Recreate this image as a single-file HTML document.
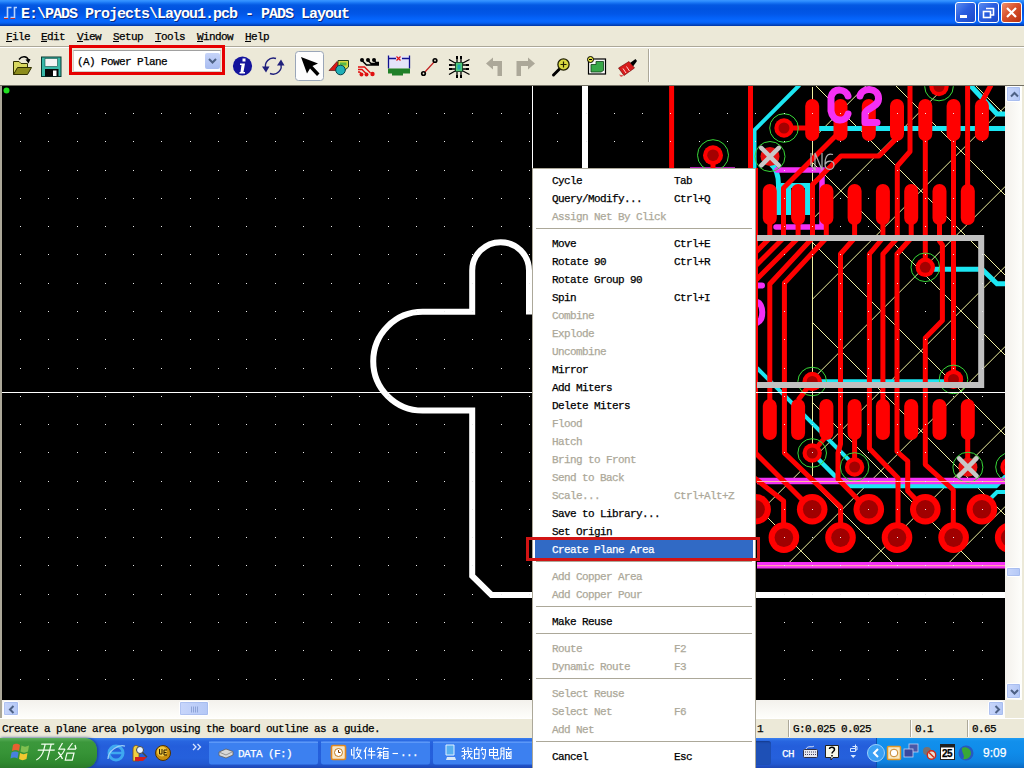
<!DOCTYPE html><html><head><meta charset="utf-8"><title>PADS Layout</title><style>
*{box-sizing:border-box}
html,body{margin:0;padding:0}
body{width:1024px;height:768px;position:relative;overflow:hidden;background:#ece9d8;font-family:"Liberation Mono",monospace;font-size:11px;letter-spacing:-0.6px;color:#000;-webkit-text-stroke:0.25px}
.abs{position:absolute}
#title{left:0;top:0;width:1024px;height:26px;background:linear-gradient(#3a95ff 0,#3090ff 1px,#1672f2 3px,#0459e2 5px,#0053e0 9px,#0257e8 14px,#0462f8 18px,#0868ff 21px,#0560f2 23px,#0244bc 25px,#0034a4 26px)}
#title .t{left:21px;top:6px;font-family:"Liberation Mono",monospace;font-weight:bold;font-size:15px;letter-spacing:-1px;color:#fff;white-space:pre;text-shadow:1px 1px 0 #0a2a80;-webkit-text-stroke:0}
.tb{position:absolute;top:2px;width:21px;height:21px;border:1px solid #fff;border-radius:3px;background:linear-gradient(135deg,#5a8cf0 0,#2a5ee0 45%,#1c48c8 100%)}
#menubar{left:0;top:26px;width:1024px;height:20px;background:#ece9d8}
#menubar span{position:absolute;top:5px;white-space:pre}
#menubar u{text-decoration:underline}
#toolbar{left:0;top:46px;width:1024px;height:40px;background:#ece9d8;border-top:1px solid #aca899}
#toolbar:before{content:"";position:absolute;left:0;top:0;width:100%;height:1px;background:#fff}
.m{position:absolute;left:552px;white-space:pre;height:14px;line-height:14px}
.m.d{color:#aca899}
.k{position:absolute;left:674px;white-space:pre;height:14px;line-height:14px}
.k.d{color:#aca899}
.sep{position:absolute;left:536px;width:216px;height:1px;background:#aca899}
.sbb{width:15px;height:16px;border:1px solid #fff;border-radius:2px;background:linear-gradient(90deg,#c8d6fb,#b4c8f6);box-shadow:0 0 0 0.5px #98b0e8 inset}
.vs{top:720px;width:2px;height:17px;border-left:1px solid #aca899;border-right:1px solid #fff}
</style></head><body>
<div id="title" class="abs">
<svg class="abs" style="left:2px;top:3px" width="18" height="18" viewBox="0 0 18 18"><path d="M2 14.5H5.5V4.5H9.5M8.5 14.5H12.5V4.5H15" stroke="#b8d4ff" stroke-width="1.6" fill="none"/><path d="M2 15.5H6M8.5 15.5H13" stroke="#c03030" stroke-width="1"/></svg>
<div class="abs t">E:\PADS Projects\Layou1.pcb - PADS Layout</div>
<div class="tb" style="left:955px"><svg width="19" height="19"><rect x="4" y="12" width="7" height="3" fill="#fff"/></svg></div>
<div class="tb" style="left:978px"><svg width="19" height="19"><path d="M7 5.5H14.5V12H12" stroke="#fff" stroke-width="1.6" fill="none"/><rect x="4.5" y="8.5" width="7" height="6" stroke="#fff" stroke-width="1.6" fill="none"/></svg></div>
<div class="tb" style="left:1001px;background:linear-gradient(135deg,#f0906c 0,#d8512c 45%,#b83010 100%)"><svg width="19" height="19"><path d="M5 5L14 14M14 5L5 14" stroke="#fff" stroke-width="2.2"/></svg></div>
</div>
<div id="menubar" class="abs">
<span style="left:6px"><u>F</u>ile</span><span style="left:41px"><u>E</u>dit</span><span style="left:77px"><u>V</u>iew</span><span style="left:113px"><u>S</u>etup</span><span style="left:155px"><u>T</u>ools</span><span style="left:197px"><u>W</u>indow</span><span style="left:245px"><u>H</u>elp</span>
</div>
<div id="toolbar" class="abs"></div>
<div class="abs" style="left:69px;top:45px;width:156px;height:30px;border:3px solid #e60000"></div>
<div class="abs" style="left:73px;top:50px;width:148px;height:22px;background:#fff;border:1px solid #d4d0c8;border-top-color:#a0a0a0"></div>
<div class="abs" style="left:77px;top:56px;white-space:pre">(A) Power Plane</div>
<div class="abs" style="left:205px;top:53px;width:15px;height:16px;background:linear-gradient(#c6d4f8,#a8bcf0);border-radius:2px"><svg width="15" height="16"><path d="M4 6L7.5 9.5L11 6" stroke="#4d6185" stroke-width="2" fill="none"/></svg></div>
<svg class="abs" style="left:0;top:46px" width="1024" height="40" viewBox="0 46 1024 40">
<path d="M13.5 74.5V61.5H19L21 63.5H27.5V67" fill="#d8d860" stroke="#303000" stroke-width="1"/>
<path d="M13.5 74.5L17.5 67.5H31.5L27.5 74.5Z" fill="#8c8c1c" stroke="#303000" stroke-width="1"/>
<path d="M19 59.5C22 55.5 27 56 28.5 60" fill="none" stroke="#000" stroke-width="1.4"/>
<path d="M25.5 59.5L30.5 59L28.5 63.5Z" fill="#000"/>
<rect x="41.5" y="57" width="19.5" height="19.5" fill="#38b8a8" stroke="#083830" stroke-width="1"/>
<rect x="45" y="58.5" width="12.5" height="8" fill="#f4f4f4" stroke="#105048" stroke-width="0.6"/>
<rect x="45" y="69" width="13.5" height="7.5" fill="#080808"/>
<rect x="53" y="70.5" width="3.5" height="5.5" fill="#fff"/>
<circle cx="242.5" cy="66" r="9.6" fill="#14149c"/>
<path d="M242.5 58.5h3v3h-3zM240 63.5h5l-1.5 8.5h1.5v1.5h-5.5v-1.5h1l1-7h-1.5z" fill="#fff"/>
<path d="M266 69A8 8 0 0 1 276 58.5" fill="none" stroke="#20207c" stroke-width="1.4"/>
<path d="M280.5 63A8 8 0 0 1 270 73.5" fill="none" stroke="#20207c" stroke-width="1.4"/>
<path d="M262 66.5L269.5 66.5L266 72.5Z" fill="#20207c"/>
<path d="M277 65.5L284.5 65.5L281 59.5Z" fill="#20207c"/>
<rect x="295.5" y="51.5" width="28" height="29" rx="3" fill="#fdfdfd" stroke="#9aa6b8" stroke-width="1"/>
<path d="M301 57L318 63.5L312.5 66L319.5 73.5L317 76L310 68.5L307 73.5Z" fill="#000"/>
<path d="M329 70.5L337 61.5L345 70.5Z" fill="#d81818" stroke="#400" stroke-width="0.6"/>
<path d="M338 60.5H348.5V67L345 70H338Z" fill="#d8d840" stroke="#204020" stroke-width="1"/>
<rect x="340" y="62.5" width="6.5" height="3" fill="#58b848"/>
<circle cx="340.5" cy="70" r="4.8" fill="#20b0b8" stroke="#084048" stroke-width="1"/>
<path d="M362 60.5L366.5 65H379M368 60.5L371 63.5H379M374 60.5L376 62.5H379" fill="none" stroke="#000" stroke-width="1.5"/>
<circle cx="362" cy="60" r="2" fill="#000"/><circle cx="368" cy="60" r="2" fill="#000"/><circle cx="374" cy="60" r="2" fill="#000"/>
<path d="M358 67H364.5L370.5 73M358 69.5H362L366 73.5M358 72H359.5L361.5 74" fill="none" stroke="#e01010" stroke-width="1.4"/>
<circle cx="361.5" cy="74.5" r="2" fill="#e01010"/><circle cx="366.5" cy="74.5" r="2" fill="#e01010"/><circle cx="372.5" cy="74" r="2.2" fill="#e01010"/>
<rect x="389" y="56" width="20" height="12.5" fill="#e4e4f8"/>
<path d="M388.5 55.5V68.5M409.5 55.5V68.5M389 58.5H396M402 58.5H409" stroke="#101090" stroke-width="1.3" fill="none"/>
<path d="M396.5 56.5L400.5 60.5M400.5 56.5L396.5 60.5" stroke="#e01010" stroke-width="1.2"/>
<path d="M388 68.5H410V73.5H403V75.5H392V73.5H388Z" fill="#208028"/>
<path d="M424 73L435 61" stroke="#c02020" stroke-width="1.2"/>
<circle cx="423.5" cy="73.5" r="2.6" fill="#000"/><circle cx="435" cy="60.5" r="2.6" fill="#000"/>
<circle cx="423.5" cy="73.5" r="0.9" fill="#ece9d8"/><circle cx="435" cy="60.5" r="0.9" fill="#ece9d8"/>
<path d="M449 59.5L456 63.5M449 74.5L456 70.5M469.5 59.5L462 63.5M469.5 74.5L462 70.5M450 65H456M450 69H456M462 65H468.5M462 69H468.5M457 57V62M461 57V62M457 72V77.5M461 72V77.5" stroke="#000" stroke-width="1.3" fill="none"/>
<path d="M449 65H452M449 69H452M466 65H469M466 69H469M457 56V59M461 56V59M457 75V78M461 75V78" stroke="#000" stroke-width="2"/>
<rect x="455.5" y="62.5" width="7" height="9" fill="#50c878" stroke="#083018" stroke-width="0.8"/>
<rect x="457.5" y="64.5" width="3" height="5" fill="#20a8b0"/>
<path d="M486 63.5L493 57.5V61H502V76H497.5V66H493V69.5Z" fill="#aca899"/>
<path d="M535 63.5L528 57.5V61H516.5V76H521V66H528V69.5Z" fill="#aca899"/>
<path d="M553.5 75L560 68.5" stroke="#000" stroke-width="3" stroke-linecap="round"/>
<circle cx="563.5" cy="64.5" r="5.6" fill="#d8d840" stroke="#202000" stroke-width="1.3"/>
<path d="M560.5 64.5H566.5M563.5 61.5V67.5" stroke="#202000" stroke-width="1.2"/>
<rect x="588.5" y="59" width="17" height="15" fill="#f8f8f8" stroke="#000" stroke-width="1.2"/>
<path d="M591 64.5H596V61.5H603.5V70.5L601 72H591Z" fill="#38a848" stroke="#104018" stroke-width="0.8"/>
<circle cx="590.5" cy="59.5" r="3" fill="#e0e040" stroke="#000" stroke-width="1"/>
<path d="M589 59.5H592" stroke="#000" stroke-width="1"/>
<path d="M630 63L635.5 59L637 61L633 66.5Z" fill="#000"/>
<path d="M618.5 68L629 61.5L634.5 68L624 75.5Z" fill="#d81c1c" stroke="#600" stroke-width="0.6"/>
<path d="M623 68.5L626 73M626.5 66.5L629.5 71" stroke="#ffd0d0" stroke-width="1"/>
<path d="M619 74.5L624 75.5L621 77Z" fill="#e05050"/>
<rect x="648" y="49" width="1" height="33" fill="#aca899"/><rect x="649" y="49" width="1" height="33" fill="#fff"/>
</svg>
<svg class="abs" style="left:0;top:0" width="1024" height="768" viewBox="0 0 1024 768"><defs><clipPath id="cv"><rect x="2" y="86" width="1003" height="614"/></clipPath><clipPath id="hc"><path d="M812 86H1005V562H757V470H812Z"/></clipPath></defs><rect x="0" y="85" width="1024" height="1" fill="#716f64"/><rect x="0" y="86" width="2" height="632" fill="#aca899"/><g clip-path="url(#cv)"><rect x="2" y="86" width="1003" height="614" fill="#000"/><g clip-path="url(#hc)"><path d="M545.7 86L-68.3 700M625.7 86L11.7 700M705.7 86L91.7 700M785.7 86L171.7 700M865.7 86L251.7 700M945.7 86L331.7 700M1025.7 86L411.7 700M1105.7 86L491.7 700M1185.7 86L571.7 700M1265.7 86L651.7 700M1345.7 86L731.7 700M1425.7 86L811.7 700M1505.7 86L891.7 700M1585.7 86L971.7 700M176 86L790 700M256 86L870 700M336 86L950 700M416 86L1030 700M496 86L1110 700M576 86L1190 700M656 86L1270 700M736 86L1350 700M816 86L1430 700M896 86L1510 700M976 86L1590 700M1056 86L1670 700M1136 86L1750 700M1216 86L1830 700" stroke="#f0f0a0" stroke-width="1" fill="none"/><path d="M812.5 87V476" stroke="#f0f0a0" stroke-width="1"/></g><g fill="none" stroke="#1ce6f2"><path d="M819 128.4H1005" stroke-width="5"/><path d="M799.5 85L754.5 130V168" stroke-width="4"/><path d="M970 85L997 114H1006" stroke-width="5"/><path d="M771 164C776 168 778.5 174 778.5 185V215" stroke-width="5"/><path d="M783.5 215V185.5H807.5V215" stroke-width="5"/><path d="M788.5 188V215" stroke-width="5"/><path d="M934 269.3H982L997 283.7H1006" stroke-width="5"/><path d="M820 381H954" stroke-width="3.5"/><path d="M757 368L851 462" stroke-width="4"/><path d="M812.2 453L840 481L846 486H996L1006 476" stroke-width="4.5"/><path d="M1006 492H997L986 503" stroke-width="4"/></g><g fill="none" stroke="#f430f4" stroke-linecap="round"><path d="M777 170H822V227H776" stroke-width="5.5"/><path d="M757 285.5H762M757 302C764 304 764 320 757 323" stroke-width="6"/></g><path d="M690 168.5H735" stroke="#b020b0" stroke-width="3"/><path d="M757 481H1005M757 565.2H1005" stroke="#f430f4" stroke-width="6.5" fill="none"/><g fill="none" stroke="#ff0000" stroke-width="5" stroke-linejoin="round"><path d="M671.6 86V168"/><path d="M750.5 86V168"/><path d="M713 155V170"/><path d="M755.5 168V453L805 502.5L812.2 509.3"/><path d="M750 474.5L783.6 501V537"/><path d="M784 128H812"/><path d="M840.5 131L783.5 188V238L755 266.5"/><path d="M897 138L879 156H841L812.5 184.5V238L769.8 284V400"/><path d="M910 86V151.5L897.3 166V238L882.9 254V400"/><path d="M925.3 140V267"/><path d="M953.5 140V379"/><path d="M967.6 86V186"/><path d="M981.8 102L991 85"/><path d="M769.8 224V238L755 253"/><path d="M798.1 224V238L755 281"/><path d="M826.3 224V238L784.4 283V453L840.6 507V537"/><path d="M854.6 224V238L840.5 254V444L838 453V479L858 499.5L868.8 509.3"/><path d="M882.9 224V238L869.4 254V448.6L898 478V537"/><path d="M911.2 224V238L897 254V451.5L907.7 461V491L925.3 509.3"/><path d="M939.5 224V241L942.4 245V320.5L925.3 338V464.6L953.3 490V537"/><path d="M812.2 381.5L798.1 400"/><path d="M812.2 453L826.3 436"/><path d="M854.6 438V467"/><path d="M967.7 438V467"/></g><rect x="805.2" y="99" width="14" height="42" rx="7" fill="#ff0000"/><rect x="833.5" y="99" width="14" height="42" rx="7" fill="#ff0000"/><rect x="861.8" y="99" width="14" height="42" rx="7" fill="#ff0000"/><rect x="890" y="99" width="14" height="42" rx="7" fill="#ff0000"/><rect x="918.3" y="99" width="14" height="42" rx="7" fill="#ff0000"/><rect x="946.6" y="99" width="14" height="42" rx="7" fill="#ff0000"/><rect x="974.9" y="99" width="14" height="42" rx="7" fill="#ff0000"/><rect x="762.8" y="184" width="14" height="41" rx="7" fill="#ff0000"/><rect x="791.1" y="184" width="14" height="41" rx="7" fill="#ff0000"/><rect x="819.4" y="184" width="14" height="41" rx="7" fill="#ff0000"/><rect x="847.6" y="184" width="14" height="41" rx="7" fill="#ff0000"/><rect x="875.9" y="184" width="14" height="41" rx="7" fill="#ff0000"/><rect x="904.2" y="184" width="14" height="41" rx="7" fill="#ff0000"/><rect x="932.5" y="184" width="14" height="41" rx="7" fill="#ff0000"/><rect x="960.8" y="184" width="14" height="41" rx="7" fill="#ff0000"/><rect x="762.8" y="399" width="14" height="41" rx="7" fill="#ff0000"/><rect x="791.1" y="399" width="14" height="41" rx="7" fill="#ff0000"/><rect x="819.4" y="399" width="14" height="41" rx="7" fill="#ff0000"/><rect x="847.6" y="399" width="14" height="41" rx="7" fill="#ff0000"/><rect x="875.9" y="399" width="14" height="41" rx="7" fill="#ff0000"/><rect x="904.2" y="399" width="14" height="41" rx="7" fill="#ff0000"/><rect x="932.5" y="399" width="14" height="41" rx="7" fill="#ff0000"/><rect x="960.8" y="399" width="14" height="41" rx="7" fill="#ff0000"/><circle cx="784" cy="128" r="9.7" fill="#ff0000"/><circle cx="784" cy="128" r="5.5" fill="#a40000"/><circle cx="784" cy="128" r="14.3" fill="none" stroke="#38d838" stroke-width="1"/><circle cx="713" cy="155.2" r="10" fill="#ff0000"/><circle cx="713" cy="155.2" r="5.8" fill="#a40000"/><circle cx="713" cy="155.2" r="15.5" fill="none" stroke="#38d838" stroke-width="1"/><circle cx="939" cy="86.5" r="9.7" fill="#ff0000"/><circle cx="939" cy="86.5" r="5.5" fill="#a40000"/><circle cx="939" cy="86.5" r="14.3" fill="none" stroke="#38d838" stroke-width="1"/><circle cx="925.3" cy="267.3" r="9.7" fill="#ff0000"/><circle cx="925.3" cy="267.3" r="5.5" fill="#a40000"/><circle cx="925.3" cy="267.3" r="14.3" fill="none" stroke="#38d838" stroke-width="1"/><circle cx="812.2" cy="381.5" r="9.7" fill="#ff0000"/><circle cx="812.2" cy="381.5" r="5.5" fill="#a40000"/><circle cx="812.2" cy="381.5" r="14.3" fill="none" stroke="#38d838" stroke-width="1"/><circle cx="953.5" cy="379.4" r="9.7" fill="#ff0000"/><circle cx="953.5" cy="379.4" r="5.5" fill="#a40000"/><circle cx="953.5" cy="379.4" r="14.3" fill="none" stroke="#38d838" stroke-width="1"/><circle cx="812.2" cy="453" r="9.7" fill="#ff0000"/><circle cx="812.2" cy="453" r="5.5" fill="#a40000"/><circle cx="812.2" cy="453" r="14.3" fill="none" stroke="#38d838" stroke-width="1"/><circle cx="854.6" cy="467" r="9.7" fill="#ff0000"/><circle cx="854.6" cy="467" r="5.5" fill="#a40000"/><circle cx="854.6" cy="467" r="14.3" fill="none" stroke="#38d838" stroke-width="1"/><circle cx="1010" cy="467" r="9.7" fill="#ff0000"/><circle cx="1010" cy="467" r="5.5" fill="#a40000"/><circle cx="1010" cy="467" r="14.3" fill="none" stroke="#38d838" stroke-width="1"/><circle cx="770" cy="156.5" r="9.5" fill="#e81010"/><circle cx="770" cy="156.5" r="15" fill="none" stroke="#38d838" stroke-width="1"/><path d="M761.2 147.8l17.5 17.5M778.8 147.8l-17.5 17.5" stroke="#c8c8c8" stroke-width="4.5" stroke-linecap="round"/><circle cx="967.9" cy="467.2" r="9.5" fill="#e81010"/><circle cx="967.9" cy="467.2" r="15" fill="none" stroke="#38d838" stroke-width="1"/><path d="M959.1 458.4l17.5 17.5M976.6 458.4l-17.5 17.5" stroke="#c8c8c8" stroke-width="4.5" stroke-linecap="round"/><circle cx="755.6" cy="509.3" r="15.3" fill="#ff0000"/><circle cx="755.6" cy="509.3" r="9.3" fill="#a00000"/><circle cx="812.2" cy="509.3" r="15.3" fill="#ff0000"/><circle cx="812.2" cy="509.3" r="9.3" fill="#a00000"/><circle cx="868.8" cy="509.3" r="15.3" fill="#ff0000"/><circle cx="868.8" cy="509.3" r="9.3" fill="#a00000"/><circle cx="925.3" cy="509.3" r="15.3" fill="#ff0000"/><circle cx="925.3" cy="509.3" r="9.3" fill="#a00000"/><circle cx="981.9" cy="509.3" r="15.3" fill="#ff0000"/><circle cx="981.9" cy="509.3" r="9.3" fill="#a00000"/><circle cx="783.9" cy="537.6" r="15.3" fill="#ff0000"/><circle cx="783.9" cy="537.6" r="9.3" fill="#a00000"/><circle cx="840.5" cy="537.6" r="15.3" fill="#ff0000"/><circle cx="840.5" cy="537.6" r="9.3" fill="#a00000"/><circle cx="897" cy="537.6" r="15.3" fill="#ff0000"/><circle cx="897" cy="537.6" r="9.3" fill="#a00000"/><circle cx="953.6" cy="537.6" r="15.3" fill="#ff0000"/><circle cx="953.6" cy="537.6" r="9.3" fill="#a00000"/><circle cx="1010.2" cy="537.6" r="15.3" fill="#ff0000"/><circle cx="1010.2" cy="537.6" r="9.3" fill="#a00000"/><g fill="none" stroke="#f430f4" stroke-width="7" stroke-linecap="round" stroke-linejoin="round"><path d="M848 96C846 89 834 87 831 97V111C833 123 846 122 848 114"/><path d="M860 96C862 87 879 87 878.5 99C878 108 865 108 865 114V122.5H877"/></g><path d="M757 481.5H1005M757 565.7H1005" stroke="#ffb8a0" stroke-width="1"/><path d="M811 153V165.5L815 170V153L822 170V153M833 154.5C826 152 825 160 825 164C825 171 834 171 834 165C834 160 827 160 825.5 164" fill="none" stroke="#b0b0b0" stroke-width="1.2"/><path d="M757 238H981.2V385H757" fill="none" stroke="#c0c0c0" stroke-width="6"/><path d="M585 86V168" stroke="#fff" stroke-width="6" fill="none"/><path d="M529 314.5V270.5A28.4 28.4 0 0 0 472.2 270.5V311.8H422.6A49.4 49.4 0 0 0 422.6 410.6H472.2V576L491.5 595H1005" stroke="#fff" stroke-width="6" fill="none"/><path d="M2 392.5H1005M532.5 86V168" stroke="#fff" stroke-width="1"/><circle cx="6.5" cy="90.5" r="3" fill="#20e020"/><path d="M20 113h1v1h-1zM20 141h1v1h-1zM20 170h1v1h-1zM20 198h1v1h-1zM20 226h1v1h-1zM20 254h1v1h-1zM20 283h1v1h-1zM20 311h1v1h-1zM20 339h1v1h-1zM20 368h1v1h-1zM20 396h1v1h-1zM20 424h1v1h-1zM20 452h1v1h-1zM20 481h1v1h-1zM20 509h1v1h-1zM20 537h1v1h-1zM20 565h1v1h-1zM20 594h1v1h-1zM20 622h1v1h-1zM20 650h1v1h-1zM20 679h1v1h-1zM48 113h1v1h-1zM48 141h1v1h-1zM48 170h1v1h-1zM48 198h1v1h-1zM48 226h1v1h-1zM48 254h1v1h-1zM48 283h1v1h-1zM48 311h1v1h-1zM48 339h1v1h-1zM48 368h1v1h-1zM48 396h1v1h-1zM48 424h1v1h-1zM48 452h1v1h-1zM48 481h1v1h-1zM48 509h1v1h-1zM48 537h1v1h-1zM48 565h1v1h-1zM48 594h1v1h-1zM48 622h1v1h-1zM48 650h1v1h-1zM48 679h1v1h-1zM77 113h1v1h-1zM77 141h1v1h-1zM77 170h1v1h-1zM77 198h1v1h-1zM77 226h1v1h-1zM77 254h1v1h-1zM77 283h1v1h-1zM77 311h1v1h-1zM77 339h1v1h-1zM77 368h1v1h-1zM77 396h1v1h-1zM77 424h1v1h-1zM77 452h1v1h-1zM77 481h1v1h-1zM77 509h1v1h-1zM77 537h1v1h-1zM77 565h1v1h-1zM77 594h1v1h-1zM77 622h1v1h-1zM77 650h1v1h-1zM77 679h1v1h-1zM105 113h1v1h-1zM105 141h1v1h-1zM105 170h1v1h-1zM105 198h1v1h-1zM105 226h1v1h-1zM105 254h1v1h-1zM105 283h1v1h-1zM105 311h1v1h-1zM105 339h1v1h-1zM105 368h1v1h-1zM105 396h1v1h-1zM105 424h1v1h-1zM105 452h1v1h-1zM105 481h1v1h-1zM105 509h1v1h-1zM105 537h1v1h-1zM105 565h1v1h-1zM105 594h1v1h-1zM105 622h1v1h-1zM105 650h1v1h-1zM105 679h1v1h-1zM133 113h1v1h-1zM133 141h1v1h-1zM133 170h1v1h-1zM133 198h1v1h-1zM133 226h1v1h-1zM133 254h1v1h-1zM133 283h1v1h-1zM133 311h1v1h-1zM133 339h1v1h-1zM133 368h1v1h-1zM133 396h1v1h-1zM133 424h1v1h-1zM133 452h1v1h-1zM133 481h1v1h-1zM133 509h1v1h-1zM133 537h1v1h-1zM133 565h1v1h-1zM133 594h1v1h-1zM133 622h1v1h-1zM133 650h1v1h-1zM133 679h1v1h-1zM161 113h1v1h-1zM161 141h1v1h-1zM161 170h1v1h-1zM161 198h1v1h-1zM161 226h1v1h-1zM161 254h1v1h-1zM161 283h1v1h-1zM161 311h1v1h-1zM161 339h1v1h-1zM161 368h1v1h-1zM161 396h1v1h-1zM161 424h1v1h-1zM161 452h1v1h-1zM161 481h1v1h-1zM161 509h1v1h-1zM161 537h1v1h-1zM161 565h1v1h-1zM161 594h1v1h-1zM161 622h1v1h-1zM161 650h1v1h-1zM161 679h1v1h-1zM190 113h1v1h-1zM190 141h1v1h-1zM190 170h1v1h-1zM190 198h1v1h-1zM190 226h1v1h-1zM190 254h1v1h-1zM190 283h1v1h-1zM190 311h1v1h-1zM190 339h1v1h-1zM190 368h1v1h-1zM190 396h1v1h-1zM190 424h1v1h-1zM190 452h1v1h-1zM190 481h1v1h-1zM190 509h1v1h-1zM190 537h1v1h-1zM190 565h1v1h-1zM190 594h1v1h-1zM190 622h1v1h-1zM190 650h1v1h-1zM190 679h1v1h-1zM218 113h1v1h-1zM218 141h1v1h-1zM218 170h1v1h-1zM218 198h1v1h-1zM218 226h1v1h-1zM218 254h1v1h-1zM218 283h1v1h-1zM218 311h1v1h-1zM218 339h1v1h-1zM218 368h1v1h-1zM218 396h1v1h-1zM218 424h1v1h-1zM218 452h1v1h-1zM218 481h1v1h-1zM218 509h1v1h-1zM218 537h1v1h-1zM218 565h1v1h-1zM218 594h1v1h-1zM218 622h1v1h-1zM218 650h1v1h-1zM218 679h1v1h-1zM246 113h1v1h-1zM246 141h1v1h-1zM246 170h1v1h-1zM246 198h1v1h-1zM246 226h1v1h-1zM246 254h1v1h-1zM246 283h1v1h-1zM246 311h1v1h-1zM246 339h1v1h-1zM246 368h1v1h-1zM246 396h1v1h-1zM246 424h1v1h-1zM246 452h1v1h-1zM246 481h1v1h-1zM246 509h1v1h-1zM246 537h1v1h-1zM246 565h1v1h-1zM246 594h1v1h-1zM246 622h1v1h-1zM246 650h1v1h-1zM246 679h1v1h-1zM275 113h1v1h-1zM275 141h1v1h-1zM275 170h1v1h-1zM275 198h1v1h-1zM275 226h1v1h-1zM275 254h1v1h-1zM275 283h1v1h-1zM275 311h1v1h-1zM275 339h1v1h-1zM275 368h1v1h-1zM275 396h1v1h-1zM275 424h1v1h-1zM275 452h1v1h-1zM275 481h1v1h-1zM275 509h1v1h-1zM275 537h1v1h-1zM275 565h1v1h-1zM275 594h1v1h-1zM275 622h1v1h-1zM275 650h1v1h-1zM275 679h1v1h-1zM303 113h1v1h-1zM303 141h1v1h-1zM303 170h1v1h-1zM303 198h1v1h-1zM303 226h1v1h-1zM303 254h1v1h-1zM303 283h1v1h-1zM303 311h1v1h-1zM303 339h1v1h-1zM303 368h1v1h-1zM303 396h1v1h-1zM303 424h1v1h-1zM303 452h1v1h-1zM303 481h1v1h-1zM303 509h1v1h-1zM303 537h1v1h-1zM303 565h1v1h-1zM303 594h1v1h-1zM303 622h1v1h-1zM303 650h1v1h-1zM303 679h1v1h-1zM331 113h1v1h-1zM331 141h1v1h-1zM331 170h1v1h-1zM331 198h1v1h-1zM331 226h1v1h-1zM331 254h1v1h-1zM331 283h1v1h-1zM331 311h1v1h-1zM331 339h1v1h-1zM331 368h1v1h-1zM331 396h1v1h-1zM331 424h1v1h-1zM331 452h1v1h-1zM331 481h1v1h-1zM331 509h1v1h-1zM331 537h1v1h-1zM331 565h1v1h-1zM331 594h1v1h-1zM331 622h1v1h-1zM331 650h1v1h-1zM331 679h1v1h-1zM359 113h1v1h-1zM359 141h1v1h-1zM359 170h1v1h-1zM359 198h1v1h-1zM359 226h1v1h-1zM359 254h1v1h-1zM359 283h1v1h-1zM359 311h1v1h-1zM359 339h1v1h-1zM359 368h1v1h-1zM359 396h1v1h-1zM359 424h1v1h-1zM359 452h1v1h-1zM359 481h1v1h-1zM359 509h1v1h-1zM359 537h1v1h-1zM359 565h1v1h-1zM359 594h1v1h-1zM359 622h1v1h-1zM359 650h1v1h-1zM359 679h1v1h-1zM388 113h1v1h-1zM388 141h1v1h-1zM388 170h1v1h-1zM388 198h1v1h-1zM388 226h1v1h-1zM388 254h1v1h-1zM388 283h1v1h-1zM388 311h1v1h-1zM388 339h1v1h-1zM388 368h1v1h-1zM388 396h1v1h-1zM388 424h1v1h-1zM388 452h1v1h-1zM388 481h1v1h-1zM388 509h1v1h-1zM388 537h1v1h-1zM388 565h1v1h-1zM388 594h1v1h-1zM388 622h1v1h-1zM388 650h1v1h-1zM388 679h1v1h-1zM416 113h1v1h-1zM416 141h1v1h-1zM416 170h1v1h-1zM416 198h1v1h-1zM416 226h1v1h-1zM416 254h1v1h-1zM416 283h1v1h-1zM416 311h1v1h-1zM416 339h1v1h-1zM416 368h1v1h-1zM416 396h1v1h-1zM416 424h1v1h-1zM416 452h1v1h-1zM416 481h1v1h-1zM416 509h1v1h-1zM416 537h1v1h-1zM416 565h1v1h-1zM416 594h1v1h-1zM416 622h1v1h-1zM416 650h1v1h-1zM416 679h1v1h-1zM444 113h1v1h-1zM444 141h1v1h-1zM444 170h1v1h-1zM444 198h1v1h-1zM444 226h1v1h-1zM444 254h1v1h-1zM444 283h1v1h-1zM444 311h1v1h-1zM444 339h1v1h-1zM444 368h1v1h-1zM444 396h1v1h-1zM444 424h1v1h-1zM444 452h1v1h-1zM444 481h1v1h-1zM444 509h1v1h-1zM444 537h1v1h-1zM444 565h1v1h-1zM444 594h1v1h-1zM444 622h1v1h-1zM444 650h1v1h-1zM444 679h1v1h-1zM472 113h1v1h-1zM472 141h1v1h-1zM472 170h1v1h-1zM472 198h1v1h-1zM472 226h1v1h-1zM472 254h1v1h-1zM472 283h1v1h-1zM472 311h1v1h-1zM472 339h1v1h-1zM472 368h1v1h-1zM472 396h1v1h-1zM472 424h1v1h-1zM472 452h1v1h-1zM472 481h1v1h-1zM472 509h1v1h-1zM472 537h1v1h-1zM472 565h1v1h-1zM472 594h1v1h-1zM472 622h1v1h-1zM472 650h1v1h-1zM472 679h1v1h-1zM501 113h1v1h-1zM501 141h1v1h-1zM501 170h1v1h-1zM501 198h1v1h-1zM501 226h1v1h-1zM501 254h1v1h-1zM501 283h1v1h-1zM501 311h1v1h-1zM501 339h1v1h-1zM501 368h1v1h-1zM501 396h1v1h-1zM501 424h1v1h-1zM501 452h1v1h-1zM501 481h1v1h-1zM501 509h1v1h-1zM501 537h1v1h-1zM501 565h1v1h-1zM501 594h1v1h-1zM501 622h1v1h-1zM501 650h1v1h-1zM501 679h1v1h-1zM529 113h1v1h-1zM529 141h1v1h-1zM529 170h1v1h-1zM529 198h1v1h-1zM529 226h1v1h-1zM529 254h1v1h-1zM529 283h1v1h-1zM529 311h1v1h-1zM529 339h1v1h-1zM529 368h1v1h-1zM529 396h1v1h-1zM529 424h1v1h-1zM529 452h1v1h-1zM529 481h1v1h-1zM529 509h1v1h-1zM529 537h1v1h-1zM529 565h1v1h-1zM529 594h1v1h-1zM529 622h1v1h-1zM529 650h1v1h-1zM529 679h1v1h-1zM557 113h1v1h-1zM557 141h1v1h-1zM557 170h1v1h-1zM557 198h1v1h-1zM557 226h1v1h-1zM557 254h1v1h-1zM557 283h1v1h-1zM557 311h1v1h-1zM557 339h1v1h-1zM557 368h1v1h-1zM557 396h1v1h-1zM557 424h1v1h-1zM557 452h1v1h-1zM557 481h1v1h-1zM557 509h1v1h-1zM557 537h1v1h-1zM557 565h1v1h-1zM557 594h1v1h-1zM557 622h1v1h-1zM557 650h1v1h-1zM557 679h1v1h-1zM586 113h1v1h-1zM586 141h1v1h-1zM586 170h1v1h-1zM586 198h1v1h-1zM586 226h1v1h-1zM586 254h1v1h-1zM586 283h1v1h-1zM586 311h1v1h-1zM586 339h1v1h-1zM586 368h1v1h-1zM586 396h1v1h-1zM586 424h1v1h-1zM586 452h1v1h-1zM586 481h1v1h-1zM586 509h1v1h-1zM586 537h1v1h-1zM586 565h1v1h-1zM586 594h1v1h-1zM586 622h1v1h-1zM586 650h1v1h-1zM586 679h1v1h-1zM614 113h1v1h-1zM614 141h1v1h-1zM614 170h1v1h-1zM614 198h1v1h-1zM614 226h1v1h-1zM614 254h1v1h-1zM614 283h1v1h-1zM614 311h1v1h-1zM614 339h1v1h-1zM614 368h1v1h-1zM614 396h1v1h-1zM614 424h1v1h-1zM614 452h1v1h-1zM614 481h1v1h-1zM614 509h1v1h-1zM614 537h1v1h-1zM614 565h1v1h-1zM614 594h1v1h-1zM614 622h1v1h-1zM614 650h1v1h-1zM614 679h1v1h-1zM642 113h1v1h-1zM642 141h1v1h-1zM642 170h1v1h-1zM642 198h1v1h-1zM642 226h1v1h-1zM642 254h1v1h-1zM642 283h1v1h-1zM642 311h1v1h-1zM642 339h1v1h-1zM642 368h1v1h-1zM642 396h1v1h-1zM642 424h1v1h-1zM642 452h1v1h-1zM642 481h1v1h-1zM642 509h1v1h-1zM642 537h1v1h-1zM642 565h1v1h-1zM642 594h1v1h-1zM642 622h1v1h-1zM642 650h1v1h-1zM642 679h1v1h-1zM670 113h1v1h-1zM670 141h1v1h-1zM670 170h1v1h-1zM670 198h1v1h-1zM670 226h1v1h-1zM670 254h1v1h-1zM670 283h1v1h-1zM670 311h1v1h-1zM670 339h1v1h-1zM670 368h1v1h-1zM670 396h1v1h-1zM670 424h1v1h-1zM670 452h1v1h-1zM670 481h1v1h-1zM670 509h1v1h-1zM670 537h1v1h-1zM670 565h1v1h-1zM670 594h1v1h-1zM670 622h1v1h-1zM670 650h1v1h-1zM670 679h1v1h-1zM699 113h1v1h-1zM699 141h1v1h-1zM699 170h1v1h-1zM699 198h1v1h-1zM699 226h1v1h-1zM699 254h1v1h-1zM699 283h1v1h-1zM699 311h1v1h-1zM699 339h1v1h-1zM699 368h1v1h-1zM699 396h1v1h-1zM699 424h1v1h-1zM699 452h1v1h-1zM699 481h1v1h-1zM699 509h1v1h-1zM699 537h1v1h-1zM699 565h1v1h-1zM699 594h1v1h-1zM699 622h1v1h-1zM699 650h1v1h-1zM699 679h1v1h-1zM727 113h1v1h-1zM727 141h1v1h-1zM727 170h1v1h-1zM727 198h1v1h-1zM727 226h1v1h-1zM727 254h1v1h-1zM727 283h1v1h-1zM727 311h1v1h-1zM727 339h1v1h-1zM727 368h1v1h-1zM727 396h1v1h-1zM727 424h1v1h-1zM727 452h1v1h-1zM727 481h1v1h-1zM727 509h1v1h-1zM727 537h1v1h-1zM727 565h1v1h-1zM727 594h1v1h-1zM727 622h1v1h-1zM727 650h1v1h-1zM727 679h1v1h-1zM755 113h1v1h-1zM755 141h1v1h-1zM755 170h1v1h-1zM755 198h1v1h-1zM755 226h1v1h-1zM755 254h1v1h-1zM755 283h1v1h-1zM755 311h1v1h-1zM755 339h1v1h-1zM755 368h1v1h-1zM755 396h1v1h-1zM755 424h1v1h-1zM755 452h1v1h-1zM755 481h1v1h-1zM755 509h1v1h-1zM755 537h1v1h-1zM755 565h1v1h-1zM755 594h1v1h-1zM755 622h1v1h-1zM755 650h1v1h-1zM755 679h1v1h-1zM784 113h1v1h-1zM784 141h1v1h-1zM784 170h1v1h-1zM784 198h1v1h-1zM784 226h1v1h-1zM784 254h1v1h-1zM784 283h1v1h-1zM784 311h1v1h-1zM784 339h1v1h-1zM784 368h1v1h-1zM784 396h1v1h-1zM784 424h1v1h-1zM784 452h1v1h-1zM784 481h1v1h-1zM784 509h1v1h-1zM784 537h1v1h-1zM784 565h1v1h-1zM784 594h1v1h-1zM784 622h1v1h-1zM784 650h1v1h-1zM784 679h1v1h-1zM812 113h1v1h-1zM812 141h1v1h-1zM812 170h1v1h-1zM812 198h1v1h-1zM812 226h1v1h-1zM812 254h1v1h-1zM812 283h1v1h-1zM812 311h1v1h-1zM812 339h1v1h-1zM812 368h1v1h-1zM812 396h1v1h-1zM812 424h1v1h-1zM812 452h1v1h-1zM812 481h1v1h-1zM812 509h1v1h-1zM812 537h1v1h-1zM812 565h1v1h-1zM812 594h1v1h-1zM812 622h1v1h-1zM812 650h1v1h-1zM812 679h1v1h-1zM840 113h1v1h-1zM840 141h1v1h-1zM840 170h1v1h-1zM840 198h1v1h-1zM840 226h1v1h-1zM840 254h1v1h-1zM840 283h1v1h-1zM840 311h1v1h-1zM840 339h1v1h-1zM840 368h1v1h-1zM840 396h1v1h-1zM840 424h1v1h-1zM840 452h1v1h-1zM840 481h1v1h-1zM840 509h1v1h-1zM840 537h1v1h-1zM840 565h1v1h-1zM840 594h1v1h-1zM840 622h1v1h-1zM840 650h1v1h-1zM840 679h1v1h-1zM868 113h1v1h-1zM868 141h1v1h-1zM868 170h1v1h-1zM868 198h1v1h-1zM868 226h1v1h-1zM868 254h1v1h-1zM868 283h1v1h-1zM868 311h1v1h-1zM868 339h1v1h-1zM868 368h1v1h-1zM868 396h1v1h-1zM868 424h1v1h-1zM868 452h1v1h-1zM868 481h1v1h-1zM868 509h1v1h-1zM868 537h1v1h-1zM868 565h1v1h-1zM868 594h1v1h-1zM868 622h1v1h-1zM868 650h1v1h-1zM868 679h1v1h-1zM897 113h1v1h-1zM897 141h1v1h-1zM897 170h1v1h-1zM897 198h1v1h-1zM897 226h1v1h-1zM897 254h1v1h-1zM897 283h1v1h-1zM897 311h1v1h-1zM897 339h1v1h-1zM897 368h1v1h-1zM897 396h1v1h-1zM897 424h1v1h-1zM897 452h1v1h-1zM897 481h1v1h-1zM897 509h1v1h-1zM897 537h1v1h-1zM897 565h1v1h-1zM897 594h1v1h-1zM897 622h1v1h-1zM897 650h1v1h-1zM897 679h1v1h-1zM925 113h1v1h-1zM925 141h1v1h-1zM925 170h1v1h-1zM925 198h1v1h-1zM925 226h1v1h-1zM925 254h1v1h-1zM925 283h1v1h-1zM925 311h1v1h-1zM925 339h1v1h-1zM925 368h1v1h-1zM925 396h1v1h-1zM925 424h1v1h-1zM925 452h1v1h-1zM925 481h1v1h-1zM925 509h1v1h-1zM925 537h1v1h-1zM925 565h1v1h-1zM925 594h1v1h-1zM925 622h1v1h-1zM925 650h1v1h-1zM925 679h1v1h-1zM953 113h1v1h-1zM953 141h1v1h-1zM953 170h1v1h-1zM953 198h1v1h-1zM953 226h1v1h-1zM953 254h1v1h-1zM953 283h1v1h-1zM953 311h1v1h-1zM953 339h1v1h-1zM953 368h1v1h-1zM953 396h1v1h-1zM953 424h1v1h-1zM953 452h1v1h-1zM953 481h1v1h-1zM953 509h1v1h-1zM953 537h1v1h-1zM953 565h1v1h-1zM953 594h1v1h-1zM953 622h1v1h-1zM953 650h1v1h-1zM953 679h1v1h-1zM982 113h1v1h-1zM982 141h1v1h-1zM982 170h1v1h-1zM982 198h1v1h-1zM982 226h1v1h-1zM982 254h1v1h-1zM982 283h1v1h-1zM982 311h1v1h-1zM982 339h1v1h-1zM982 368h1v1h-1zM982 396h1v1h-1zM982 424h1v1h-1zM982 452h1v1h-1zM982 481h1v1h-1zM982 509h1v1h-1zM982 537h1v1h-1zM982 565h1v1h-1zM982 594h1v1h-1zM982 622h1v1h-1zM982 650h1v1h-1zM982 679h1v1h-1z" fill="#e8e8e8"/></g></svg>
<div class="abs" style="left:1005px;top:86px;width:17px;height:614px;background:linear-gradient(90deg,#f3f1ec,#fefefb)"></div>
<div class="abs" style="left:1022px;top:86px;width:2px;height:652px;background:#ece9d8"></div>
<div class="abs sbb" style="left:1006px;top:86px"><svg width="15" height="16"><path d="M4 9.5L7.5 6L11 9.5" stroke="#4d6185" stroke-width="2" fill="none"/></svg></div>
<div class="abs sbb" style="left:1006px;top:683px"><svg width="15" height="16"><path d="M4 6L7.5 9.5L11 6" stroke="#4d6185" stroke-width="2" fill="none"/></svg></div>
<div class="abs sbb" style="left:1006px;top:567px;height:10px"></div>
<div class="abs" style="left:2px;top:700px;width:1003px;height:18px;background:linear-gradient(#f3f1ec,#fefefb)"></div>
<div class="abs" style="left:1005px;top:700px;width:17px;height:18px;background:#ece9d8"></div>
<div class="abs sbb" style="left:3px;top:701px;width:16px;height:15px"><svg width="16" height="15"><path d="M9.5 4L6 7.5L9.5 11" stroke="#4d6185" stroke-width="2" fill="none"/></svg></div>
<div class="abs sbb" style="left:988px;top:701px;width:16px;height:15px"><svg width="16" height="15"><path d="M6.5 4L10 7.5L6.5 11" stroke="#4d6185" stroke-width="2" fill="none"/></svg></div>
<div class="abs sbb" style="left:179px;top:701px;width:30px;height:15px"><svg width="30" height="15"><path d="M11.5 4.5V10.5M13.5 4.5V10.5M15.5 4.5V10.5M17.5 4.5V10.5" stroke="#8ea4d8" stroke-width="1"/></svg></div>
<div class="abs" style="left:0;top:718px;width:1024px;height:20px;background:#ece9d8;border-top:1px solid #fff"></div>
<div class="abs" style="left:2px;top:723px;white-space:pre">Create a plane area polygon using the board outline as a guide.</div>
<div class="abs" style="left:757px;top:723px;white-space:pre">1</div>
<div class="abs" style="left:793px;top:723px;white-space:pre">G:0.025 0.025</div>
<div class="abs" style="left:915px;top:723px;white-space:pre">0.1</div>
<div class="abs" style="left:972px;top:723px;white-space:pre">0.65</div>
<div class="abs vs" style="left:788px"></div><div class="abs vs" style="left:910px"></div><div class="abs vs" style="left:967px"></div>
<div class="abs" style="left:0;top:738px;width:1024px;height:30px;background:linear-gradient(#3a80f0 0,#2866e0 3px,#245edb 8px,#2560dc 20px,#2258d0 26px,#1c46b4 30px)"></div>
<div class="abs" style="left:0;top:738px;width:97px;height:30px;border-radius:0 12px 12px 0;background:linear-gradient(#5cb05c 0,#3c983c 4px,#379437 14px,#2f8a2f 24px,#2a7a2a 30px);box-shadow:1px 0 3px #1a3c90"></div>
<svg class="abs" style="left:0;top:738px" width="540" height="30" viewBox="0 738 540 30">
<g transform="translate(1,-1)">
<path d="M12 746C15 744 17 745 19 746L18 752C16 751 14 750.5 11 752Z" fill="#e86030"/>
<path d="M20.5 746.5C23 748 25 748 28 746.5L27 752.5C24 754 22 754 19.5 752.5Z" fill="#80c050"/>
<path d="M10.5 753.5C13.5 752 15.5 752.5 17.5 753.5L16.5 759.5C14.5 758.5 12.5 758 9.5 759.5Z" fill="#4880e0"/>
<path d="M19 754C21.5 755.5 23.5 755.5 26.5 754L25.5 760C22.5 761.5 20.5 761.5 18 760Z" fill="#f0c830"/>
</g>
<g stroke="#f4fff0" stroke-width="1.25" fill="none" transform="translate(-1,-1) skewX(-14) translate(187,0)">
<path d="M41 745H54M39 751H56M45 745V751C45 756 43 759 40 761M51 745V761"/>
<path d="M62 744L60 750H66M66 750C65 755 62 759 59 761M60 753C62 755 64 757 66 760M72 744L69 750H77M75 746L77 750M69 754H76V761H69Z"/>
</g>
<circle cx="116" cy="753" r="7" fill="none" stroke="#3ea8f0" stroke-width="3"/><path d="M110 753H122" stroke="#3ea8f0" stroke-width="2.5"/><path d="M108 759C108 751 118 744 125 746" stroke="#9cd0f8" stroke-width="1.3" fill="none"/>
<path d="M133 761V749C133 745 138 744 139 748V761Z" fill="#f0d040" stroke="#805010" stroke-width="0.8"/><path d="M135 757H147L143 761H135Z" fill="#d02020"/><circle cx="140" cy="750" r="3.5" fill="#e8f4ff" stroke="#444" stroke-width="1"/><path d="M142.5 752.5L147 757" stroke="#444" stroke-width="1.5"/>
<circle cx="163" cy="753" r="7.5" fill="#c89010" stroke="#503000" stroke-width="1"/><circle cx="162" cy="751.5" r="5" fill="#f0c840"/><path d="M159.5 749V754H162V749M164 750H167M164 752.5H166.5M164 750V755H167" stroke="#302000" stroke-width="1" fill="none"/>
<path d="M193 744L196 747L193 750M197.5 744L200.5 747L197.5 750" stroke="#d8e4fc" stroke-width="1.3" fill="none"/>
<rect x="209" y="741.5" width="109" height="23" rx="2.5" fill="#3c80f0"/><rect x="209" y="741.5" width="109" height="1.5" fill="#5c98f8"/>
<rect x="321" y="741.5" width="109" height="23" rx="2.5" fill="#3c80f0"/><rect x="321" y="741.5" width="109" height="1.5" fill="#5c98f8"/>
<rect x="433" y="741.5" width="109" height="23" rx="2.5" fill="#3c80f0"/><rect x="433" y="741.5" width="109" height="1.5" fill="#5c98f8"/>
<path d="M219 752L226 749L233 751.5V755L226 758L219 755.5Z" fill="#d8d8d8" stroke="#606060" stroke-width="0.8"/><path d="M219 752L226 755L233 751.5" stroke="#808080" stroke-width="0.8" fill="none"/>
<rect x="331.5" y="745.5" width="14" height="14" rx="1.5" fill="#f8e8c8" stroke="#e08820" stroke-width="1.6"/><circle cx="338.5" cy="752.5" r="4" fill="#fff" stroke="#c07818" stroke-width="1"/><path d="M338.5 750V752.5H340.5" stroke="#804000" stroke-width="1" fill="none"/>
<path d="M446 745H454V755H446Z" fill="#58b0f0" stroke="#e0f0ff" stroke-width="1"/><path d="M447 757H455L456 760H446Z" fill="#d8e8f8"/>
<g stroke="#fff" stroke-width="1.1" fill="none">
<path d="M351.5 749V755H354M354 747V759M358 747L356 751M357 750H361.5M360.5 750C360 754 358 757 355.5 759M357 752C358 755 360 757.5 362 759"/>
<path d="M366.5 747L364 752M365.5 750V759M370 748L368.5 751.5M368.5 751.5H375M367.5 755H375.5M371.5 747.5V759"/>
<path d="M378.5 747L377 750M378 748.5H382M384.5 747L383 750M384 748.5H388.5M377.5 752.5H382.5M380 750.5V759M380 753.5L377.5 757.5M380 754L382 756M383.5 751.5H388V758.5H383.5ZM383.5 754H388M383.5 756.2H388"/>
<path d="M392.5 753.5H398"/>
</g>
<g stroke="#fff" stroke-width="1.1" fill="none">
<path d="M464.5 747.5L462 749M461.5 751.5H472.5M464.5 749V759L463 758M461.5 756.5L467 753.5M468 747V751C468.5 755 470 757.5 472 759V757M471.5 753L467 758.5M470.5 748L471.5 749.5"/>
<path d="M477 747L476 749.5M474.5 749.5H479V758.5H474.5ZM474.5 754H479M482.5 747L481 751M481.5 749.5H485.5C485.5 754 485 757.5 484 759L482.5 758M482 752.5L483.5 755"/>
<path d="M489.5 749.5H497.5V755.5H489.5ZM489.5 752.5H497.5M493.5 747V757.5C493.5 759 494.5 759 498.5 759V757.5"/>
<path d="M501 748H504V759L503 758.5M501 748V755C501 757 500.5 758 500 759M501 751H504M501 754H504M508.5 747V749M505.5 749.5H511.5M506.5 751V758.5H511V751M507.5 752L510 757M510 752L507.5 757"/>
</g>
</svg>
<div class="abs" style="left:238px;top:747.5px;color:#fff;white-space:pre">DATA (F:)</div>
<div class="abs" style="left:400px;top:747px;color:#fff;white-space:pre">...</div>
<div class="abs" style="left:545px;top:741px;width:226px;height:24px;border-radius:3px;background:#1e50b6;box-shadow:inset 1px 1px 2px #14388a"></div>
<div class="abs" style="left:876px;top:738px;width:148px;height:30px;background:linear-gradient(#1e9cf4 0,#1290ec 3px,#0f8cea 14px,#0e82e0 24px,#0a68c0 30px);border-left:1px solid #0c50b0"></div>
<div class="abs" style="left:782px;top:748px;color:#fff;white-space:pre">CH</div>
<svg class="abs" style="left:790px;top:738px" width="234" height="30" viewBox="790 738 234 30">
<rect x="803.5" y="749.5" width="14" height="8" rx="1" fill="#e8e8f0" stroke="#303048" stroke-width="1"/><path d="M805 752H816M805 754.5H816" stroke="#404060" stroke-width="1" stroke-dasharray="1 1"/><path d="M806 749C808 745 812 748 814 746" stroke="#fff" stroke-width="0.8" fill="none"/>
<path d="M825.5 745.5H838.5V757.5H833L831 760V757.5H825.5Z" fill="#f8f8e8" stroke="#202020" stroke-width="1"/><path d="M829.5 749C829.5 746.5 834.5 746.5 834.5 749.5C834.5 751.5 832 751.5 832 753.5M832 755V756.5" stroke="#000" stroke-width="1.5" fill="none"/>
<path d="M850.5 748.5H855.5V744.5M852.5 746.5H857V750H855.5M850.5 748.5V751.5H855.5V748.5" stroke="#d8e8ff" stroke-width="1" fill="none"/><path d="M850.5 755H856L853.2 758Z" fill="#d8e8ff"/>
<circle cx="876" cy="753" r="8.5" fill="#3aa0f4" stroke="#9cd0fc" stroke-width="1"/><path d="M878 749L874 753L878 757" stroke="#fff" stroke-width="2" fill="none"/>
<rect x="887.5" y="746.5" width="13" height="13" rx="1" fill="#f8e8c0" stroke="#e09828" stroke-width="1.5"/><circle cx="894" cy="753" r="3.8" fill="#fff" stroke="#c07818" stroke-width="0.9"/>
<rect x="909" y="744" width="9" height="8" fill="#4858a8" stroke="#c8d0f0" stroke-width="0.8"/><rect x="904" y="749" width="9" height="8" fill="#3848a0" stroke="#c8d0f0" stroke-width="0.8"/>
<circle cx="927" cy="751" r="4" fill="#787070"/><circle cx="931.5" cy="755" r="4.2" fill="#e8e0d0" stroke="#d02818" stroke-width="1.4"/><path d="M929 752.5L934 757.5" stroke="#d02818" stroke-width="1.4"/>
<rect x="940.5" y="744.5" width="14" height="15" fill="#fff" stroke="#202020" stroke-width="1"/><rect x="940.5" y="744.5" width="14" height="3" fill="#202020"/>
<circle cx="966" cy="753" r="7.5" fill="#2858c0"/><path d="M962 748C966 746 971 749 971 753C971 757 967 760 963 759C966 756 961 752 962 748Z" fill="#38a838"/>
</svg>
<div class="abs" style="left:942px;top:748px;font-family:'Liberation Sans',sans-serif;font-weight:bold;font-size:10px;letter-spacing:-0.5px">25</div>
<div class="abs" style="left:983px;top:746px;color:#fff;white-space:pre;font-family:'Liberation Sans',sans-serif;font-size:12px;letter-spacing:0">9:09</div>
<div class="abs" style="left:532px;top:168px;width:224px;height:600px;background:#fff;border:1px solid #aca899;border-bottom:0"></div>
<div class="m" style="top:174px">Cycle</div>
<div class="k" style="top:174px">Tab</div>
<div class="m" style="top:192px">Query/Modify...</div>
<div class="k" style="top:192px">Ctrl+Q</div>
<div class="m d" style="top:210px">Assign Net By Click</div>
<div class="sep" style="top:228px"></div>
<div class="m" style="top:237px">Move</div>
<div class="k" style="top:237px">Ctrl+E</div>
<div class="m" style="top:255px">Rotate 90</div>
<div class="k" style="top:255px">Ctrl+R</div>
<div class="m" style="top:273px">Rotate Group 90</div>
<div class="m" style="top:291px">Spin</div>
<div class="k" style="top:291px">Ctrl+I</div>
<div class="m d" style="top:309px">Combine</div>
<div class="m d" style="top:327px">Explode</div>
<div class="m d" style="top:345px">Uncombine</div>
<div class="m" style="top:363px">Mirror</div>
<div class="m" style="top:381px">Add Miters</div>
<div class="m" style="top:399px">Delete Miters</div>
<div class="m d" style="top:417px">Flood</div>
<div class="m d" style="top:435px">Hatch</div>
<div class="m d" style="top:453px">Bring to Front</div>
<div class="m d" style="top:471px">Send to Back</div>
<div class="m d" style="top:489px">Scale...</div>
<div class="k d" style="top:489px">Ctrl+Alt+Z</div>
<div class="m" style="top:507px">Save to Library...</div>
<div class="m" style="top:525px">Set Origin</div>
<div class="abs" style="left:535px;top:540px;width:218px;height:18px;background:#316ac5"></div>
<div class="abs" style="left:526px;top:537px;width:234px;height:24px;border:3px solid #d21414"></div>
<div class="m" style="top:543px;color:#fff">Create Plane Area</div>
<div class="sep" style="top:561px"></div>
<div class="m d" style="top:570px">Add Copper Area</div>
<div class="m d" style="top:588px">Add Copper Pour</div>
<div class="sep" style="top:606px"></div>
<div class="m" style="top:615px">Make Reuse</div>
<div class="sep" style="top:633px"></div>
<div class="m d" style="top:642px">Route</div>
<div class="k d" style="top:642px">F2</div>
<div class="m d" style="top:660px">Dynamic Route</div>
<div class="k d" style="top:660px">F3</div>
<div class="sep" style="top:678px"></div>
<div class="m d" style="top:687px">Select Reuse</div>
<div class="m d" style="top:705px">Select Net</div>
<div class="k d" style="top:705px">F6</div>
<div class="m d" style="top:723px">Add Net</div>
<div class="sep" style="top:741px"></div>
<div class="m" style="top:750px">Cancel</div>
<div class="k" style="top:750px">Esc</div></body></html>
